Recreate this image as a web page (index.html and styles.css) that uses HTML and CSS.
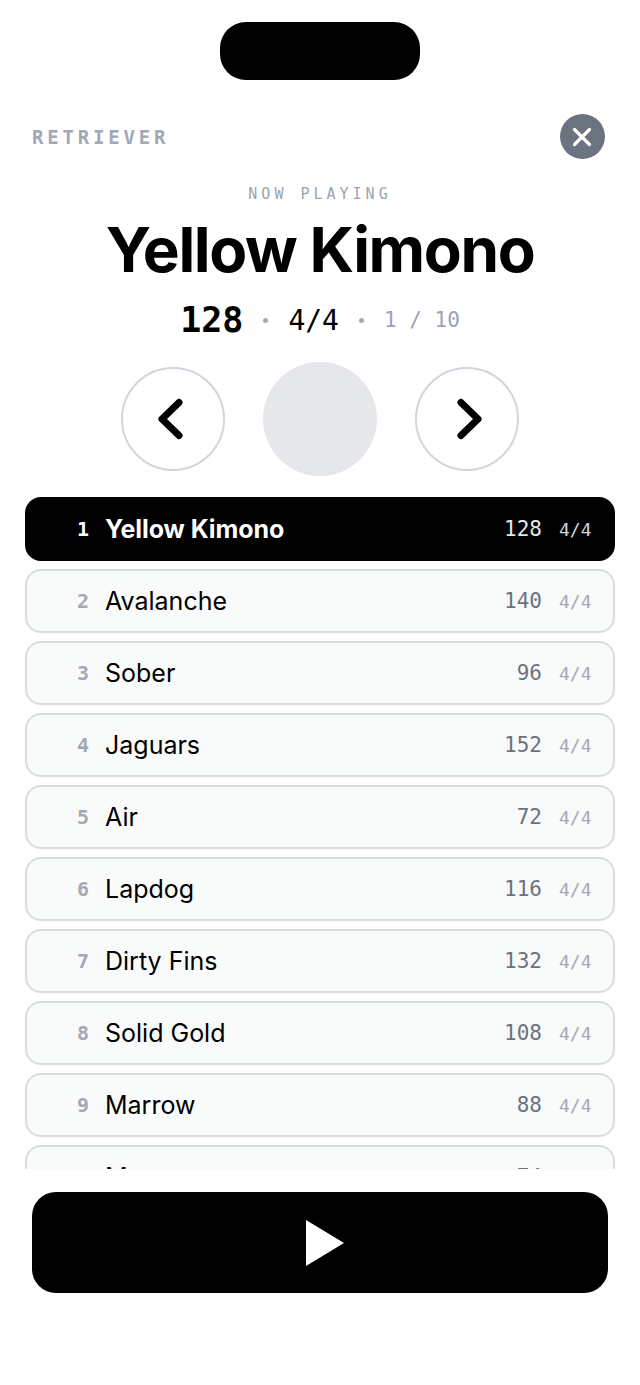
FILE: index.html
```html
<!DOCTYPE html>
<html lang="en">
<head>
    <meta charset="UTF-8">
    <meta name="viewport" content="width=device-width, initial-scale=1.0">
    <title>Retriever</title>
    <link rel="stylesheet" href="styles.css">
</head>
<body>
    <div class="island-wrap"><div class="island"></div></div>

    <header class="top-bar">
        <span class="brand">RETRIEVER</span>
        <button class="close-btn" aria-label="Close">
            <svg width="22" height="22" viewBox="0 0 22 22"><path d="M3.5 3.5 L18.5 18.5 M18.5 3.5 L3.5 18.5" stroke="#fff" stroke-width="3.2" stroke-linecap="round" fill="none"/></svg>
        </button>
    </header>

    <section class="now-playing">
        <div class="label">NOW PLAYING</div>
        <h1 class="song-title">Yellow Kimono</h1>
        <div class="song-meta">
            <span class="meta-bpm">128</span>
            <span class="meta-dot"></span>
            <span class="meta-sig">4/4</span>
            <span class="meta-dot"></span>
            <span class="meta-pos">1 / 10</span>
        </div>
    </section>

    <div class="transport">
        <button class="nav-btn" aria-label="Previous">
            <svg width="30" height="44" viewBox="0 0 30 44"><path d="M21 5.5 L4 22 L21 38.5" stroke="#000" stroke-width="7" stroke-linecap="round" stroke-linejoin="round" fill="none"/></svg>
        </button>
        <div class="center-disc"></div>
        <button class="nav-btn" aria-label="Next">
            <svg width="30" height="44" viewBox="0 0 30 44"><path d="M9 5.5 L26 22 L9 38.5" stroke="#000" stroke-width="7" stroke-linecap="round" stroke-linejoin="round" fill="none"/></svg>
        </button>
    </div>

    <div class="song-list">
        <div class="song active"><span class="num">1</span><span class="name">Yellow Kimono</span><span class="bpm">128</span><span class="sig">4/4</span></div>
        <div class="song"><span class="num">2</span><span class="name">Avalanche</span><span class="bpm">140</span><span class="sig">4/4</span></div>
        <div class="song"><span class="num">3</span><span class="name">Sober</span><span class="bpm">96</span><span class="sig">4/4</span></div>
        <div class="song"><span class="num">4</span><span class="name">Jaguars</span><span class="bpm">152</span><span class="sig">4/4</span></div>
        <div class="song"><span class="num">5</span><span class="name">Air</span><span class="bpm">72</span><span class="sig">4/4</span></div>
        <div class="song"><span class="num">6</span><span class="name">Lapdog</span><span class="bpm">116</span><span class="sig">4/4</span></div>
        <div class="song"><span class="num">7</span><span class="name">Dirty Fins</span><span class="bpm">132</span><span class="sig">4/4</span></div>
        <div class="song"><span class="num">8</span><span class="name">Solid Gold</span><span class="bpm">108</span><span class="sig">4/4</span></div>
        <div class="song"><span class="num">9</span><span class="name">Marrow</span><span class="bpm">88</span><span class="sig">4/4</span></div>
        <div class="song"><span class="num">10</span><span class="name">Mono</span><span class="bpm">74</span><span class="sig">4/4</span></div>
    </div>

    <div class="footer">
        <button class="play-btn" aria-label="Play">
            <svg width="40" height="46" viewBox="0 0 40 46"><polygon points="1,0 39,23 1,46" fill="#fff"/></svg>
        </button>
    </div>
</body>
</html>
```

FILE: styles.css
```css
body {
    margin: 0;
    height: 1385px;
    overflow: hidden;
    background: #fff;
    color: #000;
    font-family: Inter, "Noto Sans", sans-serif;
}

button {
    padding: 0;
    border: none;
    cursor: pointer;
}

.island-wrap {
    display: flex;
    justify-content: center;
    padding-top: 22px;
}

.island {
    width: 200px;
    height: 58px;
    border-radius: 26px;
    background: #000;
}

.top-bar {
    display: flex;
    justify-content: space-between;
    align-items: center;
    margin-top: 34px;
    padding: 0 35px 0 32px;
}

.brand {
    font-family: "DejaVu Sans Mono", monospace;
    font-size: 19px;
    font-weight: 700;
    letter-spacing: 3.8px;
    color: #a2a9b6;
}

.close-btn {
    display: flex;
    justify-content: center;
    align-items: center;
    width: 45px;
    height: 45px;
    padding-right: 2px;
    border-radius: 50%;
    background: #6b7280;
}

.now-playing {
    text-align: center;
    margin-top: 25px;
}

.label {
    font-family: "DejaVu Sans Mono", monospace;
    font-size: 15px;
    line-height: 20px;
    letter-spacing: 4px;
    color: #9ca3af;
}

.song-title {
    margin: 10px 0 0;
    font-size: 62px;
    line-height: 72px;
    font-weight: 700;
    letter-spacing: -1.4px;
}

.song-meta {
    display: flex;
    justify-content: center;
    align-items: center;
    gap: 20px;
    margin-top: 12px;
    height: 44px;
    font-family: "DejaVu Sans Mono", monospace;
}

.meta-bpm {
    font-size: 35px;
    font-weight: 700;
}

.meta-sig {
    font-size: 28px;
}

.meta-pos {
    font-size: 21px;
    color: #9ca3af;
}

.meta-dot {
    width: 5px;
    height: 5px;
    border-radius: 50%;
    background: #a2a9b6;
}

.transport {
    display: flex;
    justify-content: center;
    align-items: center;
    gap: 38px;
    margin-top: 20px;
}

.nav-btn {
    display: flex;
    justify-content: center;
    align-items: center;
    box-sizing: border-box;
    width: 104px;
    height: 104px;
    border: 2px solid #d1d5de;
    border-radius: 50%;
    background: #fff;
}

.center-disc {
    width: 114px;
    height: 114px;
    border-radius: 50%;
    background: #e5e7eb;
}

.song-list {
    display: flex;
    flex-direction: column;
    gap: 8px;
    height: 672px;
    margin-top: 21px;
    padding: 0 25px;
    overflow: hidden;
}

.song {
    display: flex;
    align-items: center;
    flex-shrink: 0;
    box-sizing: border-box;
    height: 64px;
    padding: 0 21px 0 30px;
    border: 2px solid #d9dce1;
    border-radius: 16px;
    background: #f9fafa;
}

.num {
    width: 32px;
    margin-right: 16px;
    text-align: right;
    font-family: "DejaVu Sans Mono", monospace;
    font-size: 20px;
    font-weight: 700;
    color: #a2a9b6;
}

.name {
    flex: 1;
    font-size: 25px;
    font-weight: 400;
}

.bpm {
    font-family: "DejaVu Sans Mono", monospace;
    font-size: 21px;
    color: #6b7280;
}

.sig {
    width: 33px;
    margin-left: 17px;
    font-family: "DejaVu Sans Mono", monospace;
    font-size: 18px;
    color: #a2a9b6;
}

.song.active {
    background: #000;
    border-color: #000;
    color: #fff;
}

.song.active .num {
    color: #fff;
}

.song.active .name {
    font-weight: 700;
    letter-spacing: -0.07px;
}

.song.active .bpm {
    color: #e5e7eb;
}

.song.active .sig {
    color: #d1d5db;
}

.footer {
    padding: 23px 32px 0;
}

.play-btn {
    display: flex;
    justify-content: center;
    align-items: center;
    box-sizing: border-box;
    width: 100%;
    height: 101px;
    padding-left: 10px;
    border-radius: 24px;
    background: #000;
}
```
